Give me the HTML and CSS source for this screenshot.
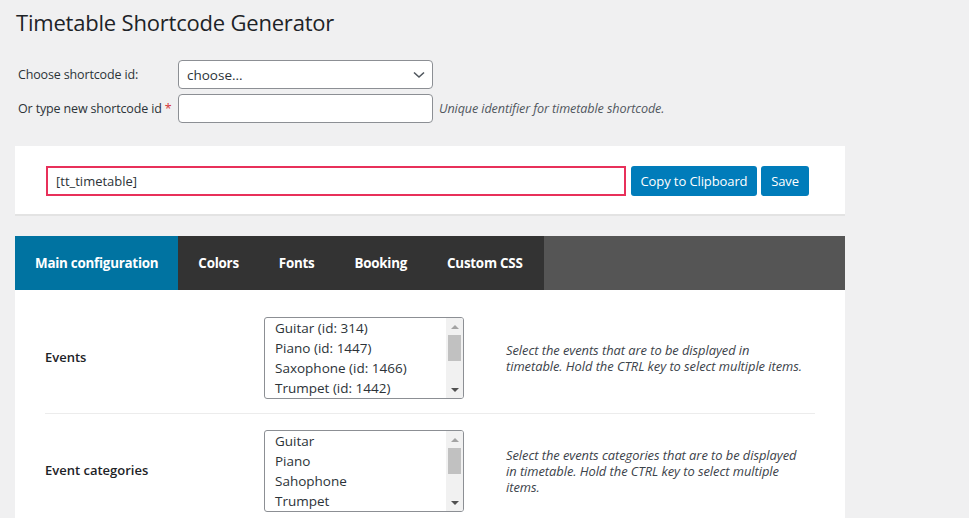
FILE: index.html
```html
<!DOCTYPE html>
<html lang="en">
<head>
<meta charset="utf-8">
<title>Timetable Shortcode Generator</title>
<link rel="stylesheet" href="styles.css">
</head>
<body>
<div class="wrap">
  <h1 class="title">Timetable Shortcode Generator</h1>

  <div class="idform">
    <div class="idrow">
      <label class="idlabel" for="sc-id">Choose shortcode id:</label>
      <div class="selectwrap">
        <select id="sc-id" class="field select"><option>choose...</option></select>
        <svg class="chev" width="12" height="8" viewBox="0 0 12 8"><path d="M1 1.5 L6 6 L11 1.5" fill="none" stroke="#50575e" stroke-width="1.6"/></svg>
      </div>
    </div>
    <div class="idrow">
      <label class="idlabel" for="sc-new">Or type new shortcode id <span class="req">*</span></label>
      <input id="sc-new" class="field" type="text">
      <span class="hint">Unique identifier for timetable shortcode.</span>
    </div>
  </div>

  <div class="panel shortcode">
    <input class="codefield" type="text" value="[tt_timetable]">
    <button class="btn copy">Copy to Clipboard</button>
    <button class="btn save">Save</button>
  </div>

  <div class="tabs">
    <div class="tab active">Main configuration</div>
    <div class="tab">Colors</div>
    <div class="tab">Fonts</div>
    <div class="tab">Booking</div>
    <div class="tab">Custom CSS</div>
  </div>

  <div class="content">
    <div class="row">
      <div class="rowlabel">Events</div>
      <div class="listbox">
        <div class="options">
          <div>Guitar (id: 314)</div>
          <div>Piano (id: 1447)</div>
          <div>Saxophone (id: 1466)</div>
          <div>Trumpet (id: 1442)</div>
        </div>
        <div class="scrollbar">
          <span class="arrow up"></span>
          <span class="track"><span class="thumb"></span></span>
          <span class="arrow down"></span>
        </div>
      </div>
      <div class="desc">Select the events that are to be displayed in timetable. Hold the CTRL key to select multiple items.</div>
    </div>
    <div class="row">
      <div class="rowlabel">Event categories</div>
      <div class="listbox">
        <div class="options">
          <div>Guitar</div>
          <div>Piano</div>
          <div>Sahophone</div>
          <div>Trumpet</div>
        </div>
        <div class="scrollbar">
          <span class="arrow up"></span>
          <span class="track"><span class="thumb"></span></span>
          <span class="arrow down"></span>
        </div>
      </div>
      <div class="desc">Select the events categories that are to be displayed in timetable. Hold the CTRL key to select multiple items.</div>
    </div>
  </div>
</div>
</body>
</html>
```
FILE: styles.css
```css
* { box-sizing: border-box; }
html, body { margin: 0; padding: 0; }
body {
  background: #f0f0f1;
  font-family: "Open Sans", "Noto Sans", sans-serif;
  color: #2c3338;
  font-size: 13px;
  height: 518px;
  overflow: hidden;
}
.wrap { width: 830px; margin-left: 15px; }
.title {
  margin: 0;
  padding: 7px 0 0 1px;
  font-size: 22px;
  font-weight: 400;
  line-height: 30px;
  color: #1d2327;
  letter-spacing: -0.2px;
}
.idform { margin-top: 23px; display: flex; flex-direction: column; gap: 5px; padding-left: 3px; }
.idrow { display: flex; align-items: center; }
.idlabel { width: 160px; font-size: 12.5px; letter-spacing: -0.15px; color: #2c3338; }
.req { color: #d63638; }
.field {
  width: 255px; height: 29px;
  border: 1px solid #8c8f94; border-radius: 4px;
  background: #fff; font: inherit; font-size: 13.5px; color: #2c3338;
  padding: 0 8px;
}
.selectwrap { position: relative; width: 255px; height: 29px; }
.select { appearance: none; -webkit-appearance: none; outline: none; }
.chev { position: absolute; right: 8px; top: 11px; pointer-events: none; }
.hint { margin-left: 6px; font-style: italic; font-size: 12.6px; color: #50575e; letter-spacing: -0.1px; }

.panel.shortcode {
  margin-top: 23px;
  background: #fff;
  border-bottom: 2px solid #e3e3e3;
  padding: 20px 0 18px 31px;
  display: flex;
  align-items: center;
}
.codefield {
  width: 580px; height: 30px;
  border: 2px solid #e8305a;
  padding: 0 8px;
  font: inherit; font-size: 13px; color: #2c3338;
  outline: none;
}
.btn {
  height: 30px;
  border: none; border-radius: 3px;
  background: #007cba; color: #fff;
  font: inherit; font-size: 13px;
  padding: 0;
  white-space: nowrap;
  letter-spacing: -0.1px;
}
.copy { margin-left: 5px; width: 126px; }
.save { margin-left: 4px; width: 48px; }

.tabs {
  margin-top: 20px;
  display: flex;
  height: 54px;
  background: #555;
}
.tab {
  background: #333;
  color: #fff;
  font-weight: 700;
  font-size: 13.4px;
  letter-spacing: -0.25px;
  display: flex; align-items: center;
  padding: 0 20px;
}
.tab:last-child { padding-right: 21px; }
.tab.active { background: #0073a1; }

.content { background: #fff; padding: 11px 30px 0; }
.row {
  display: flex; align-items: center;
  padding: 16px 0 14px;
  border-bottom: 1px solid #ececec;
}
.rowlabel { width: 219px; font-weight: 600; font-size: 13px; color: #1d2327; margin-top: -3px; }
.listbox {
  width: 200px; height: 82px;
  border: 1px solid #8c8f94; border-radius: 3px;
  display: flex; overflow: hidden; background: #fff;
}
.options { flex: 1; padding: 0 0 0 10px; font-size: 13.5px; line-height: 20px; color: #2c3338; white-space: nowrap; }
.scrollbar { width: 17px; background: #f1f1f1; display: flex; flex-direction: column; }
.arrow { height: 17px; display: flex; align-items: center; justify-content: center; }
.arrow::before { content: ""; border-left: 4px solid transparent; border-right: 4px solid transparent; }
.arrow.up::before { border-bottom: 4px solid #a3a3a3; }
.arrow.down::before { border-top: 4px solid #505050; }
.track { flex: 1; padding: 0 2px; }
.thumb { display: block; height: 26px; background: #c1c1c1; }
.desc {
  margin-left: 42px; width: 300px;
  font-style: italic; font-size: 12.9px; line-height: 16px; color: #3c434a;
  letter-spacing: -0.05px;
}
```
